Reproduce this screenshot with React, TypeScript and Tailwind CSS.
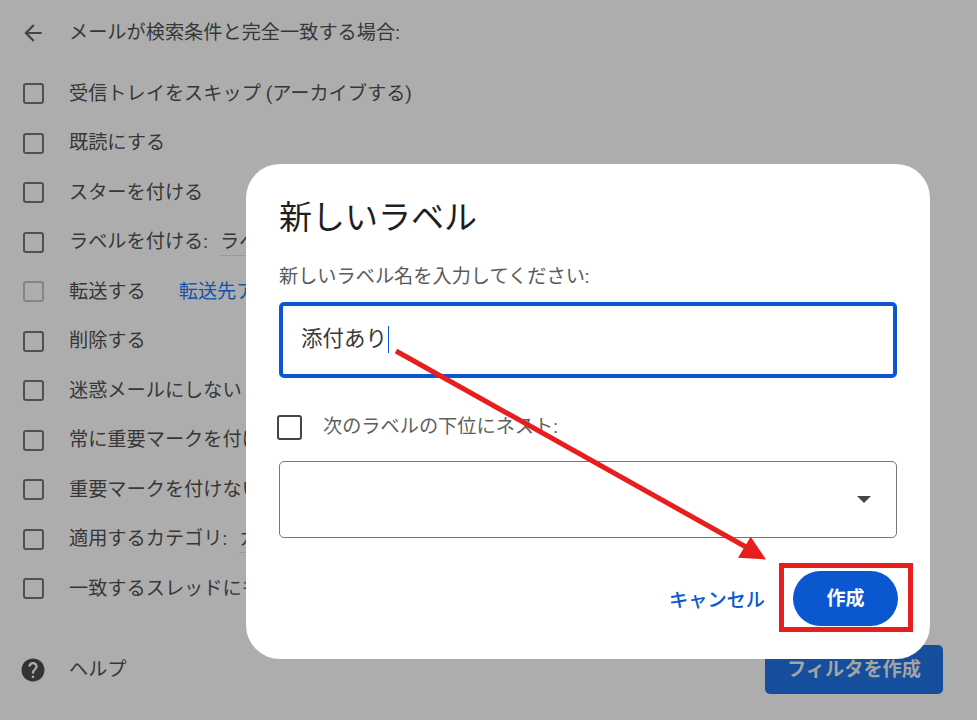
const font = { fontFamily: '"Roboto", "Noto Sans CJK JP", sans-serif' };

const Checkbox = ({ disabled }: { disabled?: boolean }) => (
    <span
        className={`box-border h-[21px] w-[21px] shrink-0 rounded-[3px] border-[2.5px] ${
            disabled ? 'border-[#858585]' : 'border-[#505050]'
        }`}
    />
);

const rows = [
    { label: '受信トレイをスキップ (アーカイブする)' },
    { label: '既読にする' },
    { label: 'スターを付ける' },
    { label: 'ラベルを付ける:', select: 'ラベルを選択' },
    { label: '転送する', link: '転送先アドレスを追加', disabled: true },
    { label: '削除する' },
    { label: '迷惑メールにしない' },
    { label: '常に重要マークを付ける' },
    { label: '重要マークを付けない' },
    { label: '適用するカテゴリ:', select: 'カテゴリを選択' },
    { label: '一致するスレッドにも適用する' },
];

const App = () => {
    return (
        <div
            className="relative h-[720px] w-[977px] overflow-hidden bg-[#adadad] text-[19.2px] leading-[26px] text-[#373737]"
            style={font}
        >
            <div className="mb-[5px] flex h-[64px] items-center pt-[1px] pl-[20px]">
                <svg width="26" height="26" viewBox="0 0 24 24" fill="#444444">
                    <path d="M20 11H7.830l5.590-5.590L12 4l-8 8 8 8 1.410-1.410L7.830 13H20v-2z" />
                </svg>
                <span className="ml-[23px]">メールが検索条件と完全一致する場合:</span>
            </div>
            <div className="flex flex-col">
                {rows.map((row) => (
                    <div key={row.label} className="flex h-[49.5px] items-center pl-[23px]">
                        <Checkbox disabled={row.disabled} />
                        <span className="ml-[25px] whitespace-nowrap">{row.label}</span>
                        {row.select && (
                            <span className="ml-[12px] border-b border-[#999999] whitespace-nowrap">
                                {row.select}
                            </span>
                        )}
                        {row.link && (
                            <span className="ml-[33px] whitespace-nowrap text-[#1554a8]">{row.link}</span>
                        )}
                    </div>
                ))}
            </div>
            <div className="mt-[31.5px] flex items-center justify-between pr-[34px] pl-[21px]">
                <div className="flex items-center">
                    <svg width="24" height="24" viewBox="0 0 24 24" fill="#333333">
                        <path d="M12 0.5C5.65 0.5 0.5 5.65 0.5 12S5.65 23.500 12 23.500 23.500 18.350 23.500 12 18.350 0.500 12 0.500zm1.150 19.500h-2.300v-2.300h2.300V20zm2.380-8.900l-1.040 1.060c-.83.840-1.340 1.540-1.340 3.340h-2.300v-.58c0-1.270.51-2.420 1.340-3.260l1.430-1.450c.42-.41.680-.99.680-1.630 0-1.270-1.030-2.300-2.300-2.300s-2.300 1.030-2.300 2.300H7.400c0-2.540 2.060-4.600 4.600-4.600s4.600 2.060 4.600 4.600c0 1.010-.41 1.930-1.070 2.590z" />
                    </svg>
                    <span className="ml-[24px]">ヘルプ</span>
                </div>
                <button className="h-[49px] w-[178px] rounded-[5px] bg-[#144e9d] text-[19.2px] font-bold text-[#a4a4a4]">
                    フィルタを作成
                </button>
            </div>

            <div className="absolute top-[164px] left-[246px] box-border h-[495px] w-[684px] rounded-[34px] bg-white pt-[34px] pr-[33px] pl-[33px]">
                <h2 className="text-[33px] leading-[40px] font-normal text-[#1f1f1f]">新しいラベル</h2>
                <p className="mt-[26px] text-[#5a5a5a]">新しいラベル名を入力してください:</p>
                <div className="mt-[12px] box-border flex h-[76px] items-center rounded-[5px] border-[4px] border-[#0b57d0] pl-[18px] text-[21.5px] text-[#3a3a3a]">
                    <span className="-translate-y-px">添付あり</span>
                    <span className="ml-[1px] h-[27px] w-px -translate-y-[1px] bg-[#0b57d0]" />
                </div>
                <div className="mt-[36px] -ml-[2px] flex items-center">
                    <span className="box-border h-[25px] w-[25px] rounded-[3px] border-2 border-[#444444]" />
                    <span className="ml-[21px] text-[#5f5f5f]">次のラベルの下位にネスト:</span>
                </div>
                <div className="mt-[21px] box-border flex h-[77px] items-center justify-end rounded-[5px] border border-[#777777] pr-[25px]">
                    <svg width="14" height="7" viewBox="0 0 14 7" fill="#444444">
                        <path d="M0 0h14L7 7z" />
                    </svg>
                </div>
                <div className="mt-[33px] flex items-center justify-end">
                    <button className="translate-y-[2px] text-[19.2px] font-medium text-[#0b57d0]">キャンセル</button>
                    <button className="mr-[-1px] ml-[28px] h-[55px] w-[105px] rounded-full bg-[#0b57d0] text-[19px] font-bold text-white">
                        作成
                    </button>
                </div>
            </div>

            <div className="absolute top-[563px] left-[779px] box-border h-[69px] w-[134px] border-[5px] border-[#e81e1e]" />
            <svg className="absolute top-0 left-0" width="977" height="720" viewBox="0 0 977 720">
                <path d="M396 351L746 547" stroke="#e81e1e" strokeWidth="5" fill="none" />
                <path d="M766 559.500L738 557.700L750.700 536.700z" fill="#e81e1e" />
            </svg>
        </div>
    );
};

export default App;
